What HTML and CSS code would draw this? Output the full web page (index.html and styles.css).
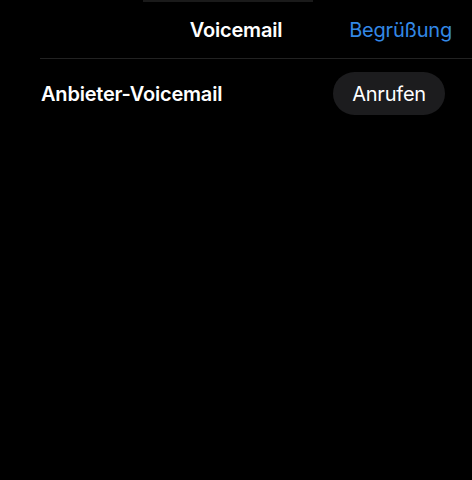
FILE: index.html
```html
<!DOCTYPE html>
<html lang="de">
<head>
<meta charset="utf-8">
<link rel="stylesheet" href="styles.css">
</head>
<body>
<div class="screen">
  <div class="topline"></div>
  <header class="navbar">
    <div class="nav-side"></div>
    <h1 class="title">Voicemail</h1>
    <div class="nav-side nav-right"><span class="nav-link">Begrüßung</span></div>
  </header>
  <div class="separator"></div>
  <div class="list">
    <div class="row">
      <span class="row-label">Anbieter-Voicemail</span>
      <button class="call-btn">Anrufen</button>
    </div>
  </div>
</div>
</body>
</html>
```
FILE: styles.css
```css
html, body {
  margin: 0;
  padding: 0;
  background: #000;
}
body {
  font-family: Inter, "Noto Sans", sans-serif;
  color: #fff;
}
.screen {
  width: 472px;
  height: 480px;
  background: #000;
  overflow: hidden;
}
.topline {
  width: 170px;
  height: 2px;
  margin-left: 143px;
  background: #1a1a1a;
}
.navbar {
  display: flex;
  align-items: center;
  height: 56px;
  padding: 0 20px;
}
.nav-side {
  flex: 1;
  display: flex;
}
.nav-right {
  justify-content: flex-end;
}
.title {
  margin: 0;
  font-size: 20px;
  font-weight: 600;
  letter-spacing: -0.2px;
}
.nav-link {
  color: #3388e6;
  font-size: 20px;
  font-weight: 400;
  letter-spacing: -0.2px;
}
.separator {
  height: 1px;
  margin-left: 40px;
  background: #222;
}
.list {
  padding: 13px 27px 0 41px;
}
.row {
  display: flex;
  align-items: center;
  justify-content: space-between;
}
.row-label {
  font-size: 20px;
  font-weight: 600;
  letter-spacing: -0.2px;
}
.call-btn {
  font-family: inherit;
  font-size: 20px;
  color: #fff;
  background: #1c1c1e;
  border: none;
  border-radius: 22px;
  height: 43px;
  padding: 0 19px;
  letter-spacing: -0.2px;
}
```
